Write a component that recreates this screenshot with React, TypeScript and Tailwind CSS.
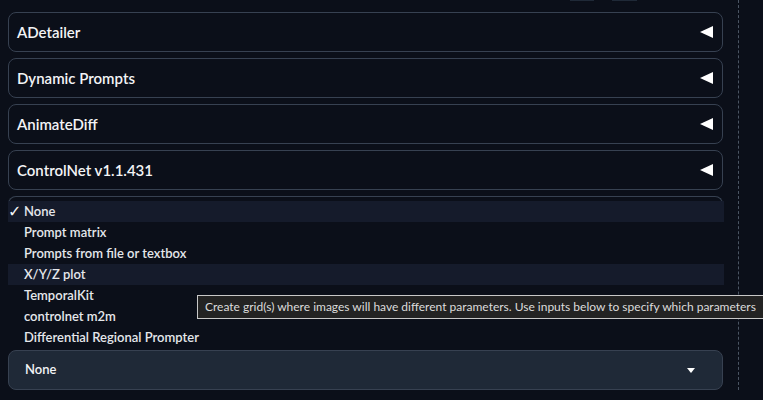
import React from "react";

const panels = ["ADetailer", "Dynamic Prompts", "AnimateDiff", "ControlNet v1.1.431"];

const scripts = [
  "None",
  "Prompt matrix",
  "Prompts from file or textbox",
  "X/Y/Z plot",
  "TemporalKit",
  "controlnet m2m",
  "Differential Regional Prompter",
];

function LeftArrow() {
  return (
    <svg width="13" height="12" viewBox="0 0 13 12" className="shrink-0">
      <polygon points="0,6 13,0 13,12" fill="#ffffff" />
    </svg>
  );
}

function Panel({ title }: { title: string }) {
  return (
    <div className="h-[40px] shrink-0 rounded-lg border border-[#374151] bg-[#0b0f19] flex items-center justify-between pl-[8px] pr-[9px]">
      <span className="text-[15px] font-semibold text-[#f3f4f6]">{title}</span>
      <LeftArrow />
    </div>
  );
}

export default function App() {
  return (
    <div
      className="relative w-[763px] h-[400px] overflow-hidden bg-[#0b0f19] flex"
      style={{ fontFamily: "'Lato', 'Liberation Sans', sans-serif" }}
    >
      <div className="w-[715px] ml-[8px] flex flex-col">
        <div className="h-[1px] flex">
          <div className="ml-[562px] w-[24px] bg-[#1f2937]" />
          <div className="ml-[18px] w-[25px] bg-[#1f2937]" />
        </div>
        <div className="mt-[11px] flex flex-col gap-[6px]">
          {panels.map((p) => (
            <Panel key={p} title={p} />
          ))}
          <div className="h-[148px] shrink-0 rounded-lg border border-[#374151] border-b-0" />
        </div>
        <div className="mt-[6px] h-[40px] shrink-0 rounded-lg border border-[#374151] bg-[#1f2937] flex items-center justify-between pl-[16px] pr-[27px]">
          <span className="text-[13px] font-semibold text-[#f3f4f6]">None</span>
          <svg width="8" height="5" viewBox="0 0 8 5">
            <polygon points="0,0 8,0 4,5" fill="#ffffff" />
          </svg>
        </div>
      </div>

      <div className="ml-[15px] h-[390px] border-l border-dashed border-[#4b5563]" />

      {/* open script dropdown */}
      <div className="absolute left-[8px] top-[201px] w-[716px] bg-[#0b0f19] flex flex-col">
        {scripts.map((s, i) => (
          <div
            key={s}
            className={`h-[21px] flex items-center text-[13px] font-semibold text-[#e5e7eb] ${
              i === 0 || i === 3 ? "bg-[#151b2b]" : ""
            }`}
          >
            <span className="w-[16px] text-[16px] font-normal leading-none text-[#f3f4f6] font-['DejaVu_Sans',sans-serif]">
              {i === 0 ? "✓" : ""}
            </span>
            <span>{s}</span>
          </div>
        ))}
      </div>

      {/* tooltip */}
      <div className="absolute left-[197px] top-[295px] w-[600px] h-[24px] pl-[7px] flex items-center whitespace-nowrap border border-[#c8c8c8] bg-[#232323] text-[12px] text-[#dcdcdc]">
        Create grid(s) where images will have different parameters. Use inputs below to specify which parameters
      </div>
    </div>
  );
}
